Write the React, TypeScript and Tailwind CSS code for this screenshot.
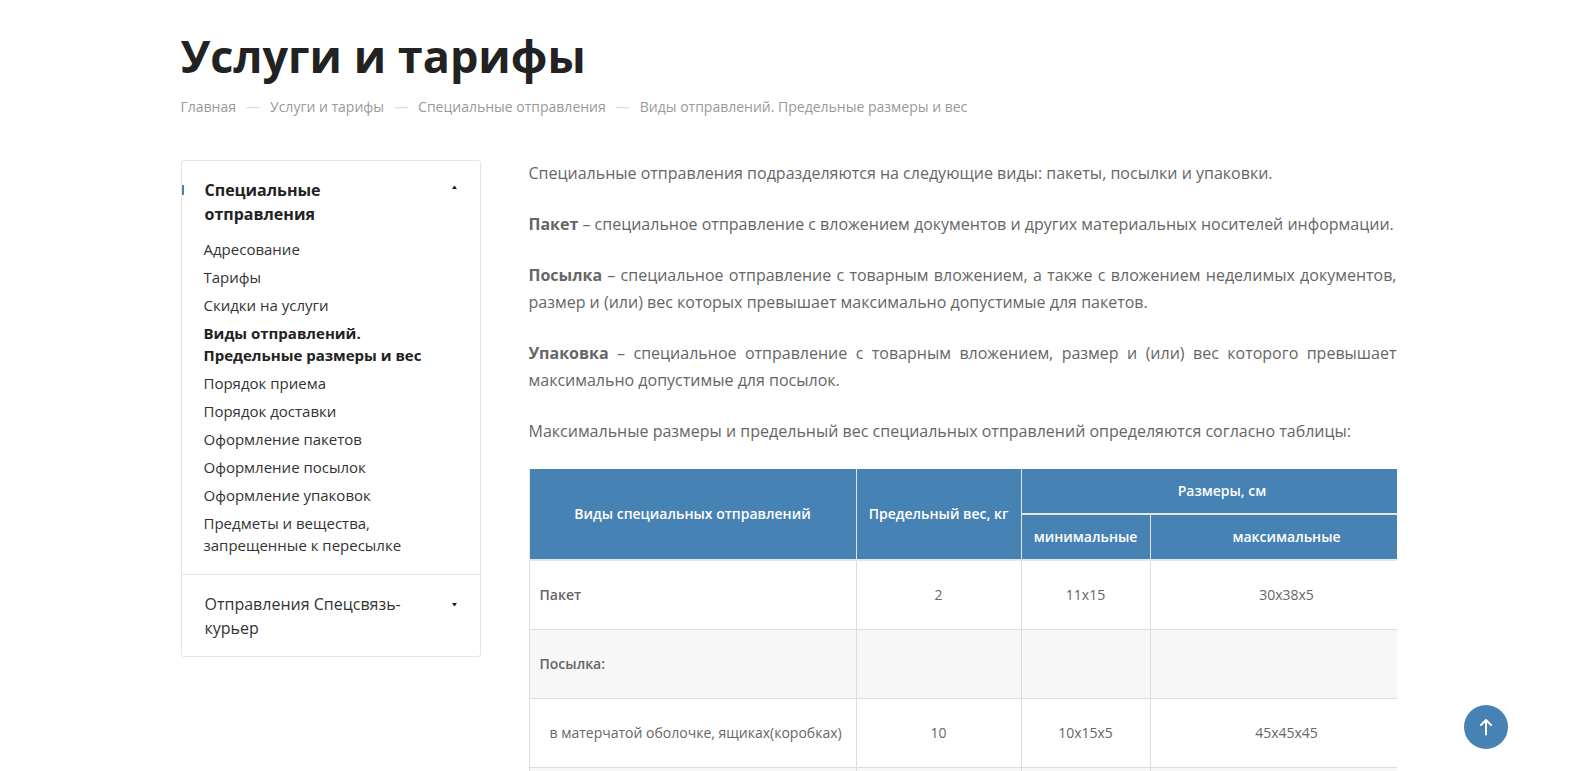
import { useState } from "react";
import clsx from "clsx";

interface MenuSection {
  title: string;
  items: string[];
}

interface TariffRow {
  name: string;
  kind: "group" | "item";
  weight: string;
  min: string;
  max: string;
}

const BREADCRUMBS = [
  "Главная",
  "Услуги и тарифы",
  "Специальные отправления",
  "Виды отправлений. Предельные размеры и вес",
];

const ACTIVE_ITEM = "Виды отправлений. Предельные размеры и вес";

const MENU: MenuSection[] = [
  {
    title: "Специальные отправления",
    items: [
      "Адресование",
      "Тарифы",
      "Скидки на услуги",
      ACTIVE_ITEM,
      "Порядок приема",
      "Порядок доставки",
      "Оформление пакетов",
      "Оформление посылок",
      "Оформление упаковок",
      "Предметы и вещества, запрещенные к пересылке",
    ],
  },
  { title: "Отправления Спецсвязь-курьер", items: [] },
];

const ROWS: TariffRow[] = [
  { name: "Пакет", kind: "group", weight: "2", min: "11х15", max: "30х38х5" },
  { name: "Посылка:", kind: "group", weight: "", min: "", max: "" },
  {
    name: "в матерчатой оболочке, ящиках(коробках)",
    kind: "item",
    weight: "10",
    min: "10х15х5",
    max: "45х45х45",
  },
  { name: "", kind: "item", weight: "", min: "", max: "" },
];

const Breadcrumbs = () => (
  <nav aria-label="Навигация" className="mt-[13px]">
    <ol className="flex flex-wrap gap-x-[10px] text-sm text-[#999]">
      {BREADCRUMBS.map((crumb, i) => (
        <li key={crumb} className="flex gap-[10px]">
          {i > 0 && <span className="text-[#ddd]">—</span>}
          {i < BREADCRUMBS.length - 1 ? <a href="#">{crumb}</a> : <span>{crumb}</span>}
        </li>
      ))}
    </ol>
  </nav>
);

const Caret = ({ up }: { up: boolean }) => (
  <svg
    width="5"
    height="3"
    viewBox="0 0 5 3"
    className={clsx("shrink-0", up ? "mt-2" : "mt-[11px]")}
    fill="#222"
  >
    <path d={up ? "M0 3L2 0H3L5 3Z" : "M0 0H5L3 3H2Z"} />
  </svg>
);

const SideMenu = () => {
  const [open, setOpen] = useState<string>(MENU[0].title);

  return (
    <aside className="w-[300px] shrink-0 self-start rounded-[3px] border border-[#e5e5e5] text-[#333]">
      {MENU.map((section) => {
        const isOpen = open === section.title;
        return (
          <div key={section.title} className="border-b border-[#e5e5e5] last:border-b-0">
            <button
              onClick={() => setOpen(isOpen ? "" : section.title)}
              aria-expanded={isOpen}
              className={clsx(
                "relative flex w-full cursor-pointer items-start justify-between py-4 pt-[17px] pr-[23px] pl-[23px] text-left text-base leading-6",
                isOpen && "pb-0 font-bold text-[#222]"
              )}
            >
              {isOpen && (
                <span className="absolute top-6 left-0 h-[10px] w-[2px] bg-[#4682b4]" />
              )}
              <span className="max-w-[200px]">{section.title}</span>
              <Caret up={isOpen} />
            </button>
            {isOpen && section.items.length > 0 && (
              <ul className="flex flex-col gap-[6px] pt-3 pr-10 pb-[18px] pl-[22px] text-[15px] leading-[22px]">
                {section.items.map((item) => (
                  <li key={item}>
                    <a
                      href="#"
                      className={clsx(item === ACTIVE_ITEM && "font-bold text-[#222]")}
                    >
                      {item}
                    </a>
                  </li>
                ))}
              </ul>
            )}
          </div>
        );
      })}
    </aside>
  );
};

const TariffTable = () => (
  <div className="overflow-hidden">
    <table className="w-[895px] table-fixed border-collapse text-sm">
      <colgroup>
        <col className="w-[327px]" />
        <col className="w-[165px]" />
        <col className="w-[129px]" />
        <col />
      </colgroup>
      <thead className="bg-[#4682b4] text-white">
        <tr className="h-[45px]">
          <th rowSpan={2} className="border-x border-b-2 border-[#e5e5e5] font-semibold">
            Виды специальных отправлений
          </th>
          <th rowSpan={2} className="border-x border-b-2 border-[#e5e5e5] font-semibold">
            Предельный вес, кг
          </th>
          <th colSpan={2} className="border-x border-b-2 border-[#e5e5e5] font-semibold">
            Размеры, см
          </th>
        </tr>
        <tr className="h-[46px]">
          <th className="border-x border-b-2 border-[#e5e5e5] font-semibold">минимальные</th>
          <th className="border-x border-b-2 border-[#e5e5e5] font-semibold">максимальные</th>
        </tr>
      </thead>
      <tbody>
        {ROWS.map((row, i) => (
          <tr key={i} className="h-[69px] text-center even:bg-[#f7f7f7]">
            <td
              className={clsx(
                "border border-[#ddd] text-left",
                row.kind === "group" ? "pl-[10px] font-semibold" : "pl-5"
              )}
            >
              {row.name}
            </td>
            <td className="border border-[#ddd]">{row.weight}</td>
            <td className="border border-[#ddd]">{row.min}</td>
            <td className="border border-[#ddd]">{row.max}</td>
          </tr>
        ))}
      </tbody>
    </table>
  </div>
);

const App = () => {
  const scrollToTop = () => window.scrollTo({ top: 0, behavior: "smooth" });

  return (
    <div className="h-screen overflow-hidden bg-white font-['Open_Sans','Noto_Sans',sans-serif]">
      <div className="mx-auto max-w-[1217px] pt-7 pl-px">
        <h1 className="text-[45px] leading-[56px] font-bold text-[#222]">Услуги и тарифы</h1>
        <Breadcrumbs />

        <div className="mt-[43px] flex gap-12">
          <SideMenu />
          <main className="min-w-0 flex-1 text-[#666]">
            <div className="mb-6 flex flex-col gap-6 text-justify text-base leading-[27px]">
              <p>
                Специальные отправления подразделяются на следующие виды: пакеты, посылки и
                упаковки.
              </p>
              <p>
                <b>Пакет</b> – специальное отправление с вложением документов и других
                материальных носителей информации.
              </p>
              <p>
                <b>Посылка</b> – специальное отправление с товарным вложением, а также с
                вложением неделимых документов, размер и (или) вес которых превышает
                максимально допустимые для пакетов.
              </p>
              <p>
                <b>Упаковка</b> – специальное отправление с товарным вложением, размер и (или)
                вес которого превышает максимально допустимые для посылок.
              </p>
              <p>
                Максимальные размеры и предельный вес специальных отправлений определяются
                согласно таблицы:
              </p>
            </div>
            <TariffTable />
          </main>
        </div>
      </div>

      <button
        onClick={scrollToTop}
        aria-label="Наверх"
        className="fixed right-[68px] bottom-[22px] flex size-11 cursor-pointer items-center justify-center rounded-full bg-[#4682b4]"
      >
        <svg
          width="14"
          height="18"
          viewBox="0 0 14 18"
          fill="none"
          stroke="#fff"
          strokeWidth="2"
          strokeLinecap="round"
          strokeLinejoin="round"
        >
          <path d="M7 16.5V2M2 7L7 2L12 7" />
        </svg>
      </button>
    </div>
  );
};

export default App;
